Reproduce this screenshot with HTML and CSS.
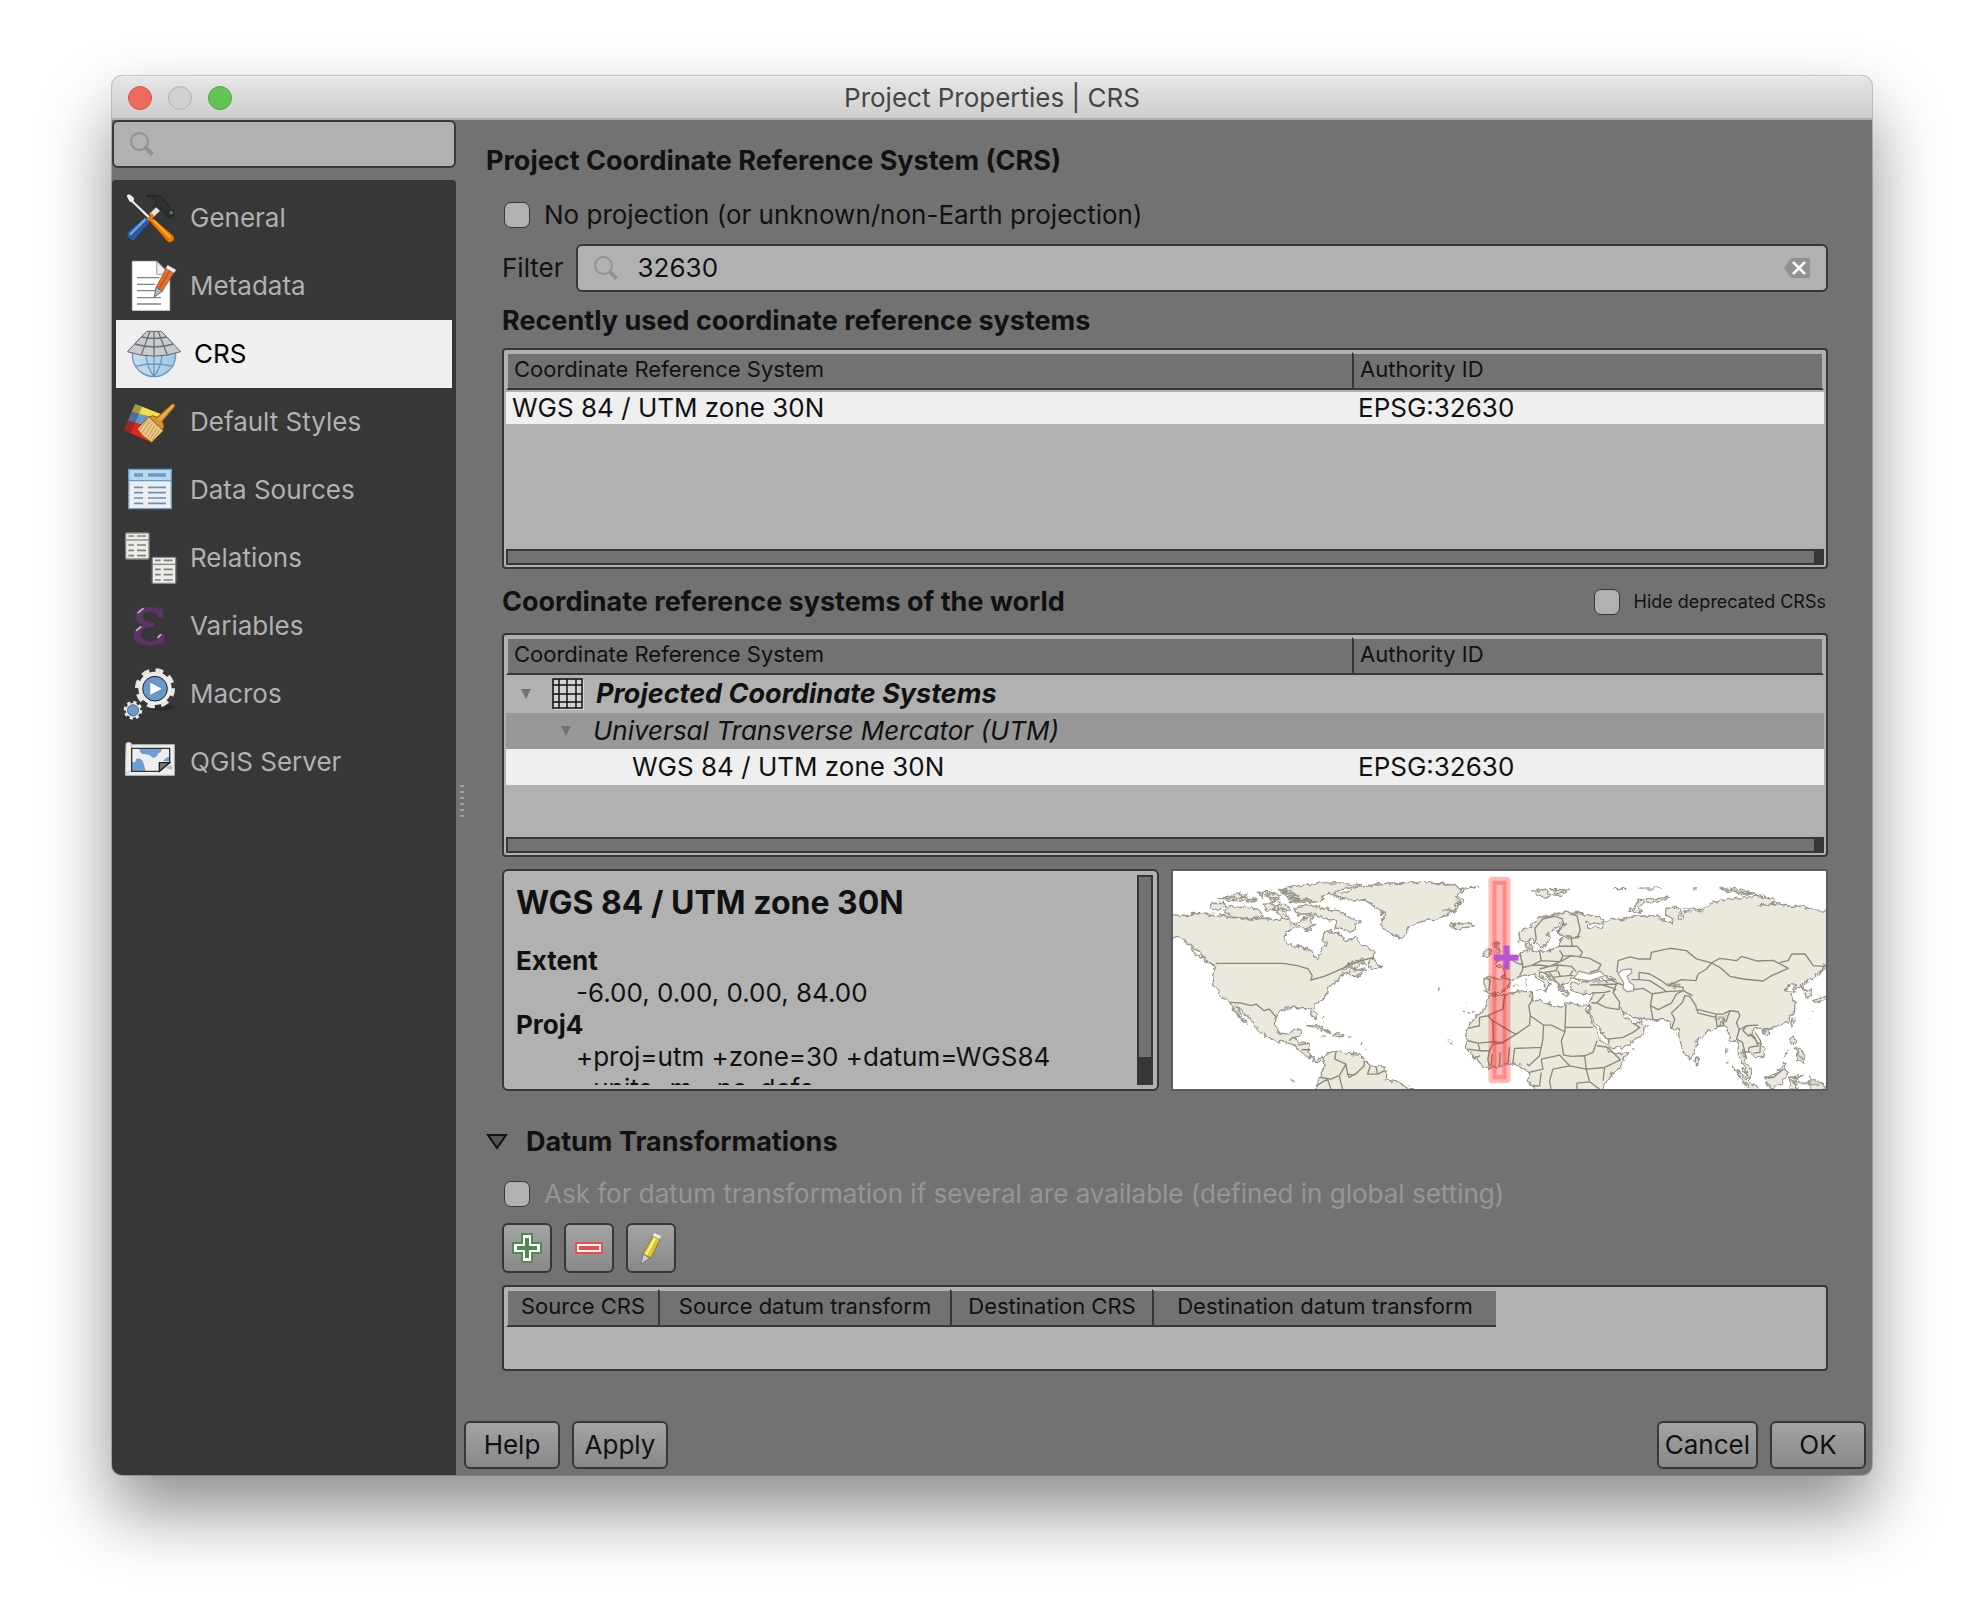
FILE: index.html
```html
<!DOCTYPE html>
<html lang="en">
<head>
<meta charset="utf-8">
<title>Project Properties | CRS</title>
<link rel="stylesheet" href="styles.css">
</head>
<body>
<div class="window">
  <header class="titlebar">
    <div class="lights">
      <button class="light light-close" aria-label="Close"></button>
      <button class="light light-min" aria-label="Minimize" disabled></button>
      <button class="light light-zoom" aria-label="Zoom"></button>
    </div>
    <span class="window-title">Project Properties | CRS</span>
  </header>
  <div class="body">
    <aside class="sidebar">
      <div class="field sidebar-search">
        <svg class="lens" viewBox="0 0 24 24" aria-hidden="true"><circle cx="9.500" cy="9.500" r="8.500"/><path class="lens-handle" d="M16 16l6.500 6.500"/></svg>
        <input type="text" aria-label="Search options">
      </div>
      <nav class="nav">
        <a class="nav-item" href="#general">
          <svg class="nav-icon" viewBox="72 396 156 156" aria-hidden="true">
            <path d="M138 408Q165 402 185 412Q205 430 210 446L221 452Q224 464 216 471L206 474Q197 468 196 456L180 446L172 454L157 439L172 426Q160 412 138 408Z" fill="#2a3133" stroke="#15191a" stroke-width="2"/>
            <circle cx="214" cy="458" r="5" fill="#667073"/>
            <path d="M168 442L180 452L160 472L148 462Z" fill="#dfe3d8"/>
            <path d="M136 470L153 484L106 538Q98 547 88 537L82 530Q76 521 84 514Z" fill="#2b5a97" stroke="#16335c" stroke-width="3"/>
            <path d="M135 479L92 522" stroke="#7ba7dc" stroke-width="7" stroke-linecap="round"/>
            <path d="M80 408Q86 400 94 407L102 414L101 424L152 472L147 477L97 428L88 424Z" fill="#eeeeee"/>
            <path d="M142 474L150 470L154 460L160 466L158 476L218 526Q225 536 218 543Q209 550 201 542L152 484L142 481Z" fill="#f57900" stroke="#d45f00" stroke-width="2"/>
            <path d="M160 480L211 532" stroke="#ffb02e" stroke-width="6"/>
            <path d="M155 490L203 540" stroke="#ce5c00" stroke-width="3"/>
          </svg><span>General</span></a>
        <a class="nav-item" href="#metadata">
          <svg class="nav-icon" viewBox="72 600 156 156" aria-hidden="true">
            <path d="M97 604H170L209 643V751H97Z" fill="#fff" stroke="#d8d8d8" stroke-width="3"/>
            <path d="M170 604L209 643H170Z" fill="#eee" stroke="#777" stroke-width="2"/>
            <path d="M111 653H178M111 673H165M111 692H165M111 713H183M111 732H183" stroke="#858585" stroke-width="4"/>
            <path d="M200 622L223 636L187 694L168 682Z" fill="#e07030" stroke="#9e4a1c" stroke-width="2"/>
            <path d="M211 628L178 685" stroke="#c0521c" stroke-width="4"/>
            <path d="M203 616L228 630L222 638L198 624Z" fill="#f5f5f5" stroke="#bbb" stroke-width="2"/>
            <path d="M168 682L187 694L163 711Z" fill="#b9b9b9" stroke="#666" stroke-width="3"/>
          </svg><span>Metadata</span></a>
        <a class="nav-item nav-item-current" href="#crs" aria-current="page">
          <svg class="nav-icon nav-icon-large" viewBox="72 798 168 168" aria-hidden="true">
            <defs><linearGradient id="globe" x1="0" y1="0" x2="1" y2="0"><stop offset="0" stop-color="#c9deec"/><stop offset="1" stop-color="#9fcae4"/></linearGradient></defs>
            <circle cx="162" cy="885" r="65" fill="url(#globe)" stroke="#6f93c6" stroke-width="4"/>
            <path d="M138 885Q140 920 162 950Q184 920 186 885M162 885V950M106 919Q162 905 218 919" fill="none" stroke="#6f93c6" stroke-width="4"/>
            <path d="M140 814H184L242 875Q162 902 82 875Z" fill="#c8ccd0" stroke="#666" stroke-width="3"/>
            <path d="M124 831Q162 839 200 831M105 852Q162 870 221 852M162 814V888M150 814L124 884M174 814L202 884" fill="none" stroke="#707070" stroke-width="4"/>
          </svg><span>CRS</span></a>
        <a class="nav-item" href="#styles">
          <svg class="nav-icon" viewBox="72 48 156 156" aria-hidden="true">
            <path d="M106 72L188 104L178 120L95 96Z" fill="#ede04a"/>
            <path d="M95 96L182 118L168 148L84 122Z" fill="#6796cf"/>
            <path d="M84 122L172 146L156 188L72 151Z" fill="#e3241f"/>
            <path d="M106 72L126 80L92 160L72 151Z" fill="#33333366"/>
            <path d="M216 72Q224 68 225 79L187 124L192 139L187 151L146 112L158 107L172 112Z" fill="#d69535" stroke="#8f5902" stroke-width="3"/>
            <path d="M146 110L190 152L155 187Q128 172 112 147Z" fill="#ebc88a" stroke="#8f5902" stroke-width="3"/>
            <path d="M143 118L119 150M150 124L126 158M157 131L134 166M164 138L142 173M171 144L150 178M178 150L156 182" stroke="#a9762d" stroke-width="2"/>
            <path d="M218 77L178 119" stroke="#f0bc6a" stroke-width="4"/>
          </svg><span>Default Styles</span></a>
        <a class="nav-item" href="#sources">
          <svg class="nav-icon" viewBox="72 252 156 156" aria-hidden="true">
            <path d="M86 268H214V386H86Z" fill="#eeeeec"/>
            <path d="M86 268H214V302H86Z" fill="#b8d8ee"/>
            <path d="M86 268H214V386H86ZM86 302H214" fill="none" stroke="#6a9acb" stroke-width="4"/>
            <path d="M102 285H129M144 285H198" stroke="#6a9acb" stroke-width="11"/>
            <path d="M102 322H129M144 322H198M102 338H129M144 338H198M102 354H129M144 354H198M102 370H129M144 370H198" stroke="#6a8fc2" stroke-width="5"/>
          </svg><span>Data Sources</span></a>
        <a class="nav-item" href="#relations">
          <svg class="nav-icon" viewBox="72 456 156 156" aria-hidden="true">
            <path d="M148 493H175V530" fill="none" stroke="#25364d" stroke-width="3"/>
            <g id="sheet">
              <rect x="77" y="459" width="70" height="78" rx="3" fill="#ececea" stroke="#888a80" stroke-width="4"/>
              <path d="M77 480H147" stroke="#888a80" stroke-width="4"/>
              <path d="M85 468H102M111 468H138M85 495H102M111 495H138M85 511H102M111 511H138M85 527H102M111 527H138" stroke="#80827a" stroke-width="5"/>
            </g>
            <use href="#sheet" x="80" y="73"/>
          </svg><span>Relations</span></a>
        <a class="nav-item" href="#variables">
          <svg class="nav-icon" viewBox="72 660 156 156" aria-hidden="true">
            <text class="epsilon" x="147" y="792" text-anchor="middle">ε</text>
            <path d="M115 698L129 686M110 751L122 741M174 772L182 764" stroke="#c8b4cb" stroke-width="5" stroke-linecap="round"/>
          </svg><span>Variables</span></a>
        <a class="nav-item" href="#macros">
          <svg class="nav-icon" viewBox="72 864 156 156" aria-hidden="true">
            <ellipse cx="182" cy="982" rx="40" ry="10" fill="#2a2a2a"/>
            <circle cx="165" cy="925" r="53" fill="none" stroke="#e6e6e6" stroke-width="14" stroke-dasharray="23 18.600"/>
            <circle cx="165" cy="925" r="50" fill="#ececec"/>
            <circle cx="165" cy="926" r="37" fill="#6b97cb" stroke="#222" stroke-width="3"/>
            <path d="M151 908L185 926L151 944Z" fill="#fff"/>
            <circle cx="99" cy="991" r="24" fill="none" stroke="#e6e6e6" stroke-width="8" stroke-dasharray="10 8.850"/>
            <circle cx="99" cy="991" r="22" fill="#ececec"/>
            <circle cx="99" cy="991" r="17" fill="#6b97cb" stroke="#444" stroke-width="2"/>
          </svg><span>Macros</span></a>
        <a class="nav-item" href="#server">
          <svg class="nav-icon" viewBox="72 1068 156 156" aria-hidden="true">
            <path d="M78 1090Q86 1084 94 1090V1094H223V1186H76Z" fill="#eeeeec" stroke="#bcbcb8" stroke-width="3"/>
            <path d="M94 1094V1172L78 1180" fill="none" stroke="#bcbcb8" stroke-width="3"/>
            <path d="M118 1106H186Q184 1118 174 1120Q172 1134 158 1133Q148 1122 134 1123Q118 1122 118 1106Z" fill="#6f9dd2"/>
            <path d="M96 1172V1146Q108 1150 108 1138Q118 1132 128 1142Q134 1158 136 1173Z" fill="#6f9dd2"/>
            <path d="M209 1130Q194 1132 190 1144H209Z" fill="#6f9dd2"/>
            <path d="M178 1174H95V1105H209V1148Z" fill="none" stroke="#333" stroke-width="4"/>
            <path d="M178 1174V1148H209Z" fill="#777" stroke="#222" stroke-width="4"/>
            <path d="M197 1162L216 1155V1170L204 1166Z" fill="#bbb"/>
          </svg><span>QGIS Server</span></a>
      </nav>
    </aside>
    <div class="splitter" aria-hidden="true"><span class="grip"></span></div>
    <main class="main">
      <div class="content">
        <h1 class="heading page-heading">Project Coordinate Reference System (CRS)</h1>
        <label class="check-row no-projection"><input type="checkbox"><span>No projection (or unknown/non-Earth projection)</span></label>
        <div class="filter-row">
          <label for="filter">Filter</label>
          <div class="field">
            <svg class="lens" viewBox="0 0 24 24" aria-hidden="true"><circle cx="9.500" cy="9.500" r="8.500"/><path class="lens-handle" d="M16 16l6.500 6.500"/></svg>
            <input id="filter" type="text" value="32630">
            <button class="clear" aria-label="Clear filter"><svg viewBox="0 0 26 20"><path d="M7 0H26V20H7L0 10Z" fill="#929292"/><path d="M9 4L21 16M21 4L9 16" stroke="#fff" stroke-width="2.500"/></svg></button>
          </div>
        </div>
        <h2 class="heading recent-heading">Recently used coordinate reference systems</h2>
        <div class="panel recent-panel">
          <table class="crs-table crs-table-recent">
            <thead><tr><th>Coordinate Reference System</th><th class="col-id">Authority ID</th></tr></thead>
            <tbody><tr class="selected"><td>WGS 84 / UTM zone 30N</td><td>EPSG:32630</td></tr></tbody>
          </table>
          <div class="scrollbar"></div>
        </div>
        <div class="world-row">
          <h2 class="heading">Coordinate reference systems of the world</h2>
          <label class="check-row check-small"><input type="checkbox"><span>Hide deprecated CRSs</span></label>
        </div>
        <div class="panel world-panel">
          <table class="crs-table crs-table-world">
            <thead><tr><th>Coordinate Reference System</th><th class="col-id">Authority ID</th></tr></thead>
            <tbody>
              <tr class="group"><td colspan="2"><div class="tree level-1">
                <svg class="twisty" viewBox="0 0 10 10" aria-hidden="true"><path d="M0 0H10L5 10Z"/></svg>
                <svg class="grid-icon" viewBox="0 0 32 32" aria-hidden="true"><rect x="2" y="2" width="30" height="30" fill="#d4d4d4"/><path d="M1 1H30V30H1ZM7 1V30M15 1V30M24 1V30M1 7H30M1 16H30M1 24H30" fill="none" stroke="#111" stroke-width="1.500"/></svg>
                <span>Projected Coordinate Systems</span></div></td></tr>
              <tr class="subgroup"><td colspan="2"><div class="tree level-2">
                <svg class="twisty" viewBox="0 0 10 10" aria-hidden="true"><path d="M0 0H10L5 10Z"/></svg>
                <span>Universal Transverse Mercator (UTM)</span></div></td></tr>
              <tr class="selected"><td class="level-3">WGS 84 / UTM zone 30N</td><td>EPSG:32630</td></tr>
            </tbody>
          </table>
          <div class="scrollbar"></div>
        </div>
        <div class="details">
          <section class="info">
            <div class="info-text">
              <h3>WGS 84 / UTM zone 30N</h3>
              <dl>
                <dt>Extent</dt><dd>-6.00, 0.00, 0.00, 84.00</dd>
                <dt>Proj4</dt><dd>+proj=utm +zone=30 +datum=WGS84<br>+units=m +no_defs</dd>
              </dl>
            </div>
            <div class="scrollbar-v"></div>
          </section>
          <div class="map">
            <svg viewBox="27 36 1956 654" preserveAspectRatio="xMidYMid slice" role="img" aria-label="World map with the CRS extent">
              <defs>
                <filter id="coast" x="0" y="0" width="1" height="1">
                  <feTurbulence type="fractalNoise" baseFrequency="0.060" numOctaves="2" seed="4"/>
                  <feDisplacementMap in="SourceGraphic" scale="20" xChannelSelector="R" yChannelSelector="G"/>
                </filter>
              </defs>
              <g class="land" filter="url(#coast)">
                <g>
                <path d="M10 165L60 172 90 166 125 162 150 170 195 165 235 175 265 182 300 178 330 182 372 180 385 198 408 192 420 176 436 168 450 172 440 190 452 198 430 208 405 206 385 210 368 218 357 236 366 250 395 262 440 270 448 288 463 297 471 285 466 272 480 262 484 250 472 240 478 220 505 218 530 228 545 248 562 242 574 234 590 255 612 268 630 282 630 294 604 302 570 305 545 318 572 312 600 308 605 312 580 320 572 332 604 334 585 348 562 350 555 342 530 350 525 362 500 378 489 390 487 410 468 424 450 436 450 452 460 470 455 482 445 470 438 450 420 445 402 449 372 446 345 458 335 474 334 504 350 525 378 528 386 512 412 508 406 528 390 538 398 547 420 550 438 556 434 575 440 592 458 602 470 596 482 602 478 608 455 606 430 594 405 575 392 562 370 554 362 545 345 548 300 530 280 516 276 500 235 455 216 438 222 450 250 495 238 488 215 458 197 430 173 414 150 382 146 350 154 322 125 300 96 270 72 252 50 238 10 230Z"/>
                <path d="M505 105L545 102 570 88 620 80 700 74 760 68 830 72 875 80 885 90 940 84 893 97 880 110 897 128 870 140 872 155 828 178 780 186 738 200 726 222 718 236 690 230 665 214 648 195 652 180 664 168 640 155 630 140 600 124 550 122 515 114Z"/>
                <path d="M345 95L372 84 430 78 470 72 545 72 594 78 545 90 520 95 480 112 464 128 425 130 375 128 405 118 360 112 392 104Z"/>
                <path d="M390 148L435 138 470 148 520 155 545 172 590 188 572 196 570 214 560 220 535 208 512 208 516 188 480 176 440 164 400 166Z"/>
                <path d="M182 158L192 145 245 142 285 152 296 172 262 178 230 174 200 170Z"/><path d="M138 150L148 133 182 134 185 142 160 155Z"/>
                <path d="M330 145L362 136 376 150 352 158 378 176 360 180 340 162Z"/><path d="M160 122L225 104 250 108 228 118 278 122 262 130 220 125Z"/><path d="M280 100L325 98 350 110 320 122 300 112Z"/><path d="M295 136L325 134 330 150 312 156Z"/><path d="M425 204L448 212 430 216Z"/>
                <path d="M606 322L628 296 636 312 652 326 630 326Z"/><path d="M430 500L455 496 500 520 478 514 450 504Z"/><path d="M505 530L515 520 544 530 520 533Z"/><path d="M472 531H486M552 531H562M590 545L594 560M602 566L605 568M824 387L832 388M844 391L848 393M905 428L907 430M898 457L904 458M912 460L916 462M926 460L930 456M848 540L850 544M854 553L858 554M862 548L864 546M376 662L392 666M470 474L480 472M474 486L478 490"/>
                <path d="M457 700L455 672 472 650 471 635 482 618 478 598 490 582 515 576 548 582 590 586 600 602 618 620 658 624 668 642 664 662 700 668 722 680 757 700Z"/>
                <path d="M856 194L870 200 900 190 930 198 915 208 875 210 866 202Z"/>
                </g>
                <g transform="translate(975 0)">
                <path d="M10 405L-10 430 -16 452 -44 475 -66 505 -68 530 -64 545 -70 568 -44 595 -28 612 -2 628 30 622 60 614 88 616 104 628 118 640 116 662 130 680 136 702H333L352 660 392 625 414 578 382 584 360 580 350 560 330 535 312 500 300 470 288 446 297 440 255 436 228 430 215 445 180 436 155 424 130 425 120 410 128 398 100 398 60 402 30 410Z"/>
                <path d="M-14 355L40 356 46 330 16 320 42 316 62 300 85 290 92 282 118 276 108 262 120 252 130 262 126 275 150 277 190 274 208 262 215 240 270 232 262 238 245 234 222 232 204 222 208 208 228 196 212 194 192 212 176 226 182 240 166 264 150 268 138 252 130 240 110 250 92 246 88 225 110 208 130 196 150 178 200 166 230 158 270 164 300 172 344 182 340 192 310 196 285 186 300 206 336 204 345 190 362 186 360 175 385 184 440 172 500 170 520 182 545 190 550 180 530 170 525 155 550 142 568 150 574 170 565 185 580 178 580 160 610 158 640 146 665 132 740 118 800 112 855 122 855 132 800 143 860 134 900 142 940 142 965 152 1030 154V318H1006L992 342 960 362 935 378 945 392 966 396 966 410 948 416 944 396 930 385 908 390 918 374 888 386 895 395 915 398 902 410 914 430 914 458 895 486 860 502 832 512 800 506 782 520 800 545 825 565 822 588 800 598 778 578 758 572 762 600 785 635 784 655 768 648 760 612 748 592 748 560 740 542 722 546 712 512 700 492 678 508 655 514 620 550 616 580 600 602 580 575 566 530 562 508 545 510 535 482 490 482 455 478 430 474 415 470 395 448 410 480 430 488 442 490 452 476 455 492 473 500 455 530 410 560 362 570 355 545 330 510 300 465 300 440 310 402 270 404 245 395 242 375 285 368 350 364 380 362 345 350 300 362 252 358 228 372 212 374 236 400 216 396 196 368 150 335 150 345 184 372 166 396 168 376 130 344 100 350 82 356 62 366 56 385 35 400 0 404 -13 395Z"/>
                <path d="M15 310L32 298 36 278 26 250 14 248 16 270 22 285Z"/><path d="M-20 292L-10 270 6 275 2 292Z"/>
                <path d="M420 156L448 125 538 115 530 122 465 132 445 145 458 160Z"/><path d="M127 96L165 92 185 108 170 118 150 108Z"/><path d="M180 92L242 94 205 104ZM192 108L220 110M370 88L415 92M445 88L515 87M610 87H620"/><path d="M690 86L740 90 795 104 760 106 705 96Z"/>
                <path d="M618 590L630 604 626 618 616 612Z"/><path d="M903 488L912 480 912 495 904 504Z"/><path d="M818 520L832 512 836 522 826 530Z"/><path d="M900 540L912 528 918 548 910 558Z"/><path d="M912 570L930 565 944 590 942 612 918 604 925 590Z"/>
                <path d="M822 655L850 648 885 612 880 630 892 640 876 676 840 684Z"/><path d="M728 622L768 655 800 684 800 702H790Z"/><path d="M898 655L940 648 908 662 925 690H902Z"/><path d="M950 665L980 665 1005 680V702H975Z"/><path d="M968 425L1030 406V418L978 430Z"/><path d="M955 645L962 662M968 455L966 460M958 472L956 476M708 565V585M755 630L765 642M882 595L900 570M70 380L85 378M110 356V382M138 388L168 392M216 408H236M280 410L292 405M428 572H438M740 640L752 658M758 666L770 685M714 608V612"/>
                </g>
              </g>
              <g class="sea" transform="translate(975 0)"><path d="M385 343L400 332 425 330 426 342 412 352 420 370 432 378 432 396 412 398 400 388 402 372Z"/><path d="M252 358L268 336 300 345 332 336 345 350 300 366Z"/></g>
              <g class="border">
                <path d="M155 313H355L400 320 432 330 444 350 440 363 480 352 520 335 552 320 580 308 628 295M197 430L232 432 262 440 276 435 300 455 315 450 338 476M375 545L385 535 398 538M400 558L435 552M412 572H438M515 577L512 600 545 615 550 645 570 648 600 620 600 605M545 615L525 650 535 690M471 655L500 660 522 650M455 680L490 660 500 690M550 645L555 655 580 640M618 620L610 645 640 645 660 635M635 622L640 645"/>
                <g transform="translate(975 0)">
                  <path d="M-12 355L2 364 -2 396M40 356L62 362M62 300L82 312 100 318 98 336 90 350M92 282L95 300 100 318M150 277L155 305 125 320 98 326M155 305L212 308 220 290 210 274M125 320L150 318 180 322 212 308M150 330L180 322 205 318 200 335 165 340M205 318L245 322 260 338M212 308L245 290 300 298 334 316 326 332 300 340M220 290L272 292 278 280 262 262 225 262 208 262M245 238L248 262M262 238L272 214 262 170 240 165M205 222L222 196 218 180 195 172 160 180 136 208 140 240 132 256M180 340L190 355 212 352 205 335M190 355L200 370M165 340L182 355M228 350L252 350M212 352L240 350 250 335"/>
                  <path d="M382 340L385 305 420 294 445 300 482 300 485 280 540 268 590 275 620 300 665 312 650 330 625 345 618 365 575 362 535 380 515 365 480 345 448 340V362L425 362M665 312L690 298 740 305 755 292 800 306 850 304 895 328 845 350 820 366 760 360 720 352 690 325 665 312M870 310L895 305 905 285 945 285 970 320 1002 322 990 345M350 355L382 372 370 400 390 430 388 452M382 372L400 378M300 378L380 375M340 378L378 390 370 400M308 402L345 400 362 396M305 432L322 432 345 405M322 432L350 446 390 452M355 540L400 535 430 520 450 505 430 492M430 392L460 388 488 405 482 440 490 482M448 362L480 365 520 390 530 398 485 405M482 440L505 452 545 432 560 405 580 395 530 398M535 380L580 385 580 395 608 410M545 510L555 480 545 462 578 430 585 410 600 412 618 440 620 450 680 465 700 465 720 455 745 458 750 470 740 490 748 512 770 500 805 498M620 450L625 462 678 475 680 465M678 475L682 502 700 500 705 478M720 455L708 490M748 512L740 540 758 550 770 600M760 515L775 530 790 528 805 560 778 565 775 580M795 520L812 545 810 580 790 582M758 515L770 500"/>
                  <path d="M128 398L130 420 118 440 122 470 162 498 185 498 226 518 229 435M226 505H310M226 518L215 545 222 588 245 592 285 590 310 580 322 545M162 498L160 540 155 565 75 568M80 525L120 498 122 470M80 525L40 550 5 548M10 485L68 520 80 525M10 485L12 548 -35 552M-5 470L40 450 45 415 50 405M-5 470L-30 475V500L-64 508M10 485L-5 470M-64 545L-35 552 -28 575 -65 570M-28 575H0L10 555 40 552M0 575L-5 600 0 625M-45 595L-28 590M8 585L5 622M32 580L30 622M60 565L55 614M75 568L70 614M155 565L150 590 118 620 112 614M155 600L160 630 118 640M155 600L210 588 240 620 190 630 180 665 185 692M240 620L290 630 285 590M290 630L345 625 392 602 355 565 322 560M290 630L300 668 262 672V690M345 625L340 665M300 668L330 690M155 640L150 680 128 680"/>
                  <path d="M826 655L850 655 880 630"/>
                </g>
              </g>
              <g filter="url(#coast)">
              <path class="rough" d="M340 92L380 96 350 104 400 108 375 118 430 122 380 126 460 126M172 118L220 116 270 120 250 126M290 102L320 106 305 114 345 120 320 128 350 132 340 150 370 156M60 245L84 262 92 285 108 292 150 320M170 172L240 178 280 180M530 335L560 325 575 335 600 330M640 155L660 160 650 168M830 158L870 154M870 110L885 134 876 150M690 76L720 74M800 70L850 74M200 435L240 490"/>
              <path class="rough" transform="translate(975 0)" d="M150 178L200 164 240 158 268 162M175 345L200 372 214 380 222 396M530 372L560 378 550 384 575 372M580 152L610 150 640 160M916 568L930 590 942 605M900 660L925 672 960 672 990 680M675 480L705 475 690 500M108 258L124 270M700 90L760 100 790 104M16 250L34 280"/>
              </g>
              <rect class="extent-halo" x="972" y="54" width="66" height="618" rx="12"/>
              <rect class="extent-line" x="990" y="72" width="30" height="582"/>
              <path class="marker" d="M989 296H1062M1026 260V331"/>
            </svg>
          </div>
        </div>
        <h2 class="heading datum-heading"><svg viewBox="0 0 22 16" aria-hidden="true"><path d="M2 1H20L11 14Z" fill="#555" stroke="#111" stroke-width="2"/></svg>Datum Transformations</h2>
        <label class="check-row check-disabled"><input type="checkbox" disabled><span>Ask for datum transformation if several are available (defined in global setting)</span></label>
        <div class="tools">
          <button class="btn tool" aria-label="Add"><svg viewBox="0 0 30 30" aria-hidden="true"><path d="M10 1H20V10H29V20H20V29H10V20H1V10H10Z" fill="#fff" stroke="#4f8a4f" stroke-width="2"/><path d="M15 5V25M5 15H25" stroke="#4f8a4f" stroke-width="4"/></svg></button>
          <button class="btn tool" aria-label="Remove"><svg viewBox="0 0 30 30" aria-hidden="true"><path d="M2 10H28V20H2Z" fill="#fff" stroke="#ef4b4b" stroke-width="2"/><path d="M5 15H25" stroke="#ef4b4b" stroke-width="4"/></svg></button>
          <button class="btn tool" aria-label="Edit"><svg viewBox="0 0 30 30" aria-hidden="true"><path d="M17 3L24 6 15 25 7 21Z" fill="#dcc83c" stroke="#8d7d1c"/><path d="M19 5L10 22" stroke="#fbf39a" stroke-width="2"/><path d="M18 0L25 3 24 6 17 3Z" fill="#eee"/><path d="M7 21L14 25 5 31Z" fill="#c9c9c9" stroke="#777"/></svg></button>
        </div>
        <div class="panel datum-panel">
          <table class="datum-table">
            <thead><tr><th class="col-source">Source CRS</th><th class="col-source-datum">Source datum transform</th><th class="col-dest">Destination CRS</th><th class="col-dest-datum">Destination datum transform</th></tr></thead>
          </table>
        </div>
      </div>
      <footer class="footer">
        <button class="btn">Help</button>
        <button class="btn">Apply</button>
        <span class="spacer"></span>
        <button class="btn">Cancel</button>
        <button class="btn">OK</button>
      </footer>
    </main>
  </div>
</div>
</body>
</html>
```
FILE: styles.css
```css
:root {
  --dark: #373737;
  --mid: #727272;
  --field: #b1b1b1;
  --light: #efefef;
  --ink: #111;
}

* { box-sizing: border-box; }

body {
  margin: 0;
  min-height: 100vh;
  padding: 76px 112px 149px;
  display: flex;
  background: #fff;
  color: var(--ink);
  font: 26px/32px Inter, "Liberation Sans", sans-serif;
}

input, button { font: inherit; color: inherit; }
h1, h2, h3, dl, dd { margin: 0; }
svg { display: block; }

.window {
  flex: 1;
  min-width: 0;
  display: flex;
  flex-direction: column;
  border-radius: 10px;
  background: var(--mid);
  box-shadow: 0 0 0 1px rgba(0, 0, 0, 0.2), 0 36px 70px rgba(0, 0, 0, 0.45);
}

.titlebar {
  height: 44px;
  display: grid;
  grid-template-columns: 1fr auto 1fr;
  align-items: center;
  padding: 0 16px;
  border-radius: 10px 10px 0 0;
  border-top: 1px solid #f4f4f4;
  border-bottom: 2px solid #b0b0b0;
  background: linear-gradient(#e6e6e6, #cecece);
  color: #454545;
}

.lights { display: flex; gap: 16px; }
.light { width: 24px; height: 24px; padding: 0; border-radius: 50%; border: 1px solid; }
.light-close { background: #ed6a5e; border-color: #d5554a; }
.light-min { background: #d0d0d0; border-color: #b3b3b3; }
.light-zoom { background: #62c454; border-color: #52a945; }

.body { flex: 1; display: flex; }

.sidebar { width: 344px; display: flex; flex-direction: column; gap: 12px; }

.field {
  height: 48px;
  display: flex;
  align-items: center;
  gap: 20px;
  padding: 0 16px;
  border: 2px solid var(--dark);
  border-radius: 6px;
  background: var(--field);
}
.field input {
  flex: 1;
  min-width: 0;
  padding: 0;
  border: 0;
  background: none;
  outline: 0;
}
.lens { width: 24px; height: 24px; fill: none; stroke: #929292; stroke-width: 2; }
.lens-handle { stroke-width: 4; }
.clear { padding: 0; border: 0; background: none; }
.clear svg { width: 26px; height: 20px; }

.nav {
  flex: 1;
  padding: 4px;
  border-radius: 4px 4px 0 10px;
  background: var(--dark);
}
.nav-item {
  height: 68px;
  display: flex;
  align-items: center;
  gap: 14px;
  padding-left: 8px;
  color: var(--field);
  text-decoration: none;
}
.nav-item-current { background: var(--light); color: #000; }
.nav-icon { width: 52px; height: 52px; overflow: visible; }
.nav-icon-large { width: 56px; height: 56px; }
.epsilon { font: 210px "DejaVu Serif", serif; fill: #5c3566; stroke: #5c3566; stroke-width: 3; }

.splitter { width: 8px; display: flex; align-items: center; justify-content: flex-end; padding-top: 8px; }
.grip {
  width: 4px;
  height: 34px;
  background: repeating-linear-gradient(#a0a0a0 0 2px, transparent 2px 6px);
}

.main { flex: 1; min-width: 0; display: flex; flex-direction: column; }

.content { padding: 25px 44px 0 38px; }

.heading { font-size: 27px; line-height: 32px; font-weight: 700; }
.page-heading, .datum-heading { margin-left: -16px; }

.check-row { display: flex; align-items: center; gap: 14px; padding-left: 2px; }
.check-row input {
  appearance: none;
  width: 26px;
  height: 26px;
  margin: 0;
  border: 1px solid var(--dark);
  border-radius: 7px;
  background: var(--field);
}
.no-projection { margin-top: 22px; }
.check-small { font-size: 18px; }
.check-disabled { margin-top: 20px; color: #969696; }

.filter-row { margin-top: 13px; display: flex; align-items: center; gap: 12px; }
.filter-row .field { flex: 1; }

.recent-heading { margin-top: 13px; }

.panel {
  display: flex;
  flex-direction: column;
  justify-content: space-between;
  padding: 2px;
  border: 2px solid var(--dark);
  border-radius: 4px;
  background: var(--field);
}
.recent-panel { margin-top: 11px; min-height: 221px; }
.world-panel { margin-top: 15px; min-height: 224px; }
.datum-panel { margin-top: 12px; min-height: 86px; }

table { border-collapse: separate; border-spacing: 0; table-layout: fixed; }
th {
  height: 38px;
  padding: 0 6px 4px;
  border-top: 2px solid var(--field);
  border-bottom: 2px solid var(--dark);
  background: var(--mid);
  font-size: 22px;
  line-height: 24px;
  font-weight: 400;
  text-align: left;
}
th + th { border-left: 2px solid var(--dark); }
th:first-child { border-left: 2px solid var(--field); }
.crs-table { width: 100%; }
.crs-table th:last-child { border-right: 2px solid var(--field); }
.col-id { width: 472px; }
td { height: 36px; padding: 0 6px; line-height: 32px; }
.crs-table-recent td { height: 34px; border-top: 2px solid var(--field); }
.selected td { background: var(--light); background-clip: padding-box; }
.group td { height: 38px; font-size: 27px; font-weight: 700; font-style: italic; }
.subgroup td { background: #989898; font-style: italic; }
.tree { display: flex; align-items: center; }
.level-1 { padding-left: 9px; }
.level-2 { padding-left: 49px; gap: 22px; }
.crs-table .level-3 { padding-left: 126px; }
.twisty { width: 10px; height: 10px; fill: var(--mid); }
.grid-icon { width: 32px; height: 32px; margin: 0 12px 0 21px; }

.scrollbar {
  height: 16px;
  border: 2px solid var(--dark);
  border-right-width: 10px;
  background: var(--mid);
}

.world-row { margin-top: 17px; padding-right: 2px; display: flex; justify-content: space-between; }

.details { margin-top: 12px; display: grid; grid-template-columns: 1fr 1fr; gap: 12px; }
.info {
  height: 222px;
  display: flex;
  padding: 4px;
  border: 2px solid var(--dark);
  border-radius: 6px;
  background: var(--field);
}
.info-text { flex: 1; overflow: hidden; padding: 8px 8px 0; }
.info h3 { font-size: 32px; line-height: 40px; margin-bottom: 22px; }
.info dt { font-weight: 700; }
.info dd { padding-left: 60px; }
.scrollbar-v {
  width: 16px;
  border: 2px solid var(--dark);
  border-bottom-width: 28px;
  background: var(--mid);
}

.map { height: 222px; border: 2px solid #5c5c5c; background: #fff; }
.map svg { width: 100%; height: 100%; }
.land { fill: #ebe9de; stroke: #98968a; stroke-width: 4; stroke-linejoin: round; }
.sea { fill: #fff; stroke: #a5a397; stroke-width: 4; }
.border { fill: none; stroke: #8a887b; stroke-width: 4; stroke-linejoin: round; }
.rough { fill: none; stroke: #98968a; stroke-width: 5; }
.extent-halo { fill: #f00; fill-opacity: 0.27; }
.extent-line { fill: none; stroke: #f00; stroke-opacity: 0.27; stroke-width: 12; }
.marker { fill: none; stroke: #b755d3; stroke-width: 18; }

.datum-heading { margin-top: 35px; display: flex; align-items: center; gap: 18px; }
.datum-heading svg { width: 22px; height: 16px; }

.btn {
  height: 48px;
  min-width: 96px;
  padding: 0 6px;
  border: 2px solid var(--dark);
  border-radius: 6px;
  background: linear-gradient(#a4a4a4, #888);
}
.tools { margin-top: 13px; display: flex; gap: 12px; }
.tool { width: 50px; height: 50px; min-width: 0; padding: 8px; }
.tool svg { width: 30px; height: 30px; overflow: visible; }

.datum-table { width: 990px; }
.datum-table th { text-align: center; }
.col-source { width: 152px; }
.col-source-datum { width: 292px; }
.col-dest { width: 202px; }

.footer { margin-top: auto; display: flex; gap: 12px; padding: 50px 6px 6px 0; }
.spacer { flex: 1; }
```
